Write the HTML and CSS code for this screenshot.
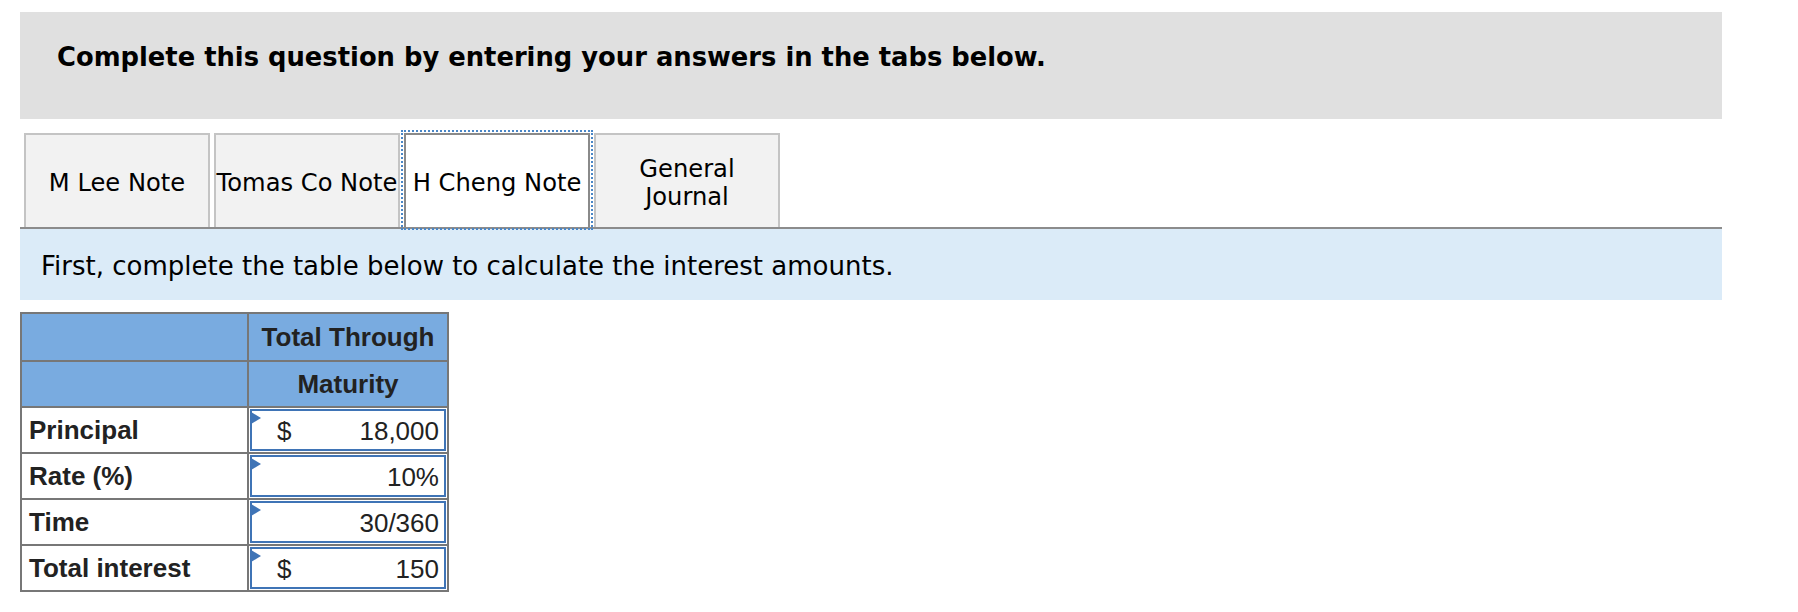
FILE: index.html
```html
<!DOCTYPE html>
<html lang="en">
<head>
<meta charset="utf-8">
<title>Notes</title>
<link rel="stylesheet" href="styles.css">
</head>
<body>
<div class="page">
  <div class="instructions">Complete this question by entering your answers in the tabs below.</div>

  <div class="tabs">
    <div class="tab">M Lee Note</div>
    <div class="tab">Tomas Co Note</div>
    <div class="tab tab-active">H Cheng Note</div>
    <div class="tab">General<br>Journal</div>
  </div>

  <div class="band">First, complete the table below to calculate the interest amounts.</div>

  <table class="calc">
    <tr class="head head-first">
      <th class="label-col"></th>
      <th class="value-col">Total Through</th>
    </tr>
    <tr class="head">
      <th class="label-col"></th>
      <th class="value-col">Maturity</th>
    </tr>
    <tr>
      <td class="label">Principal</td>
      <td class="cell"><div class="input"><span class="cur">$</span><span class="num">18,000</span></div></td>
    </tr>
    <tr>
      <td class="label">Rate (%)</td>
      <td class="cell"><div class="input"><span class="cur"></span><span class="num">10%</span></div></td>
    </tr>
    <tr>
      <td class="label">Time</td>
      <td class="cell"><div class="input"><span class="cur"></span><span class="num">30/360</span></div></td>
    </tr>
    <tr>
      <td class="label">Total interest</td>
      <td class="cell"><div class="input"><span class="cur">$</span><span class="num">150</span></div></td>
    </tr>
  </table>
</div>
</body>
</html>
```

FILE: styles.css
```css
html, body {
  margin: 0;
  padding: 0;
  background: #ffffff;
}

.page {
  width: 1702px;
  padding: 12px 0 0 20px;
}

.instructions {
  background: #e0e0e0;
  height: 107px;
  box-sizing: border-box;
  padding: 30px 0 0 37px;
  font-family: "DejaVu Sans", Verdana, sans-serif;
  font-weight: bold;
  font-size: 25.8px;
  line-height: 30px;
  color: #000;
}

.tabs {
  display: flex;
  gap: 4px;
  margin-top: 14px;
  padding-left: 4px;
}

.tab {
  width: 186px;
  height: 94px;
  box-sizing: border-box;
  border: 2px solid #c4c4c4;
  border-bottom: none;
  background: #f2f2f2;
  display: flex;
  align-items: center;
  justify-content: center;
  text-align: center;
  font-family: "DejaVu Sans", Verdana, sans-serif;
  font-size: 24.2px;
  line-height: 28px;
  color: #000;
  white-space: nowrap;
  padding-top: 4px;
}

.tab-active {
  background: #ffffff;
  border-color: #8a8a8a;
  outline: 2px dotted #4a86c6;
  outline-offset: 1px;
}

.band {
  border-top: 2px solid #8c8c8c;
  background: #dbebf8;
  height: 73px;
  box-sizing: border-box;
  padding: 22px 0 0 21px;
  font-family: "DejaVu Sans", Verdana, sans-serif;
  font-size: 26px;
  line-height: 30px;
  color: #000;
}

.calc {
  margin-top: 12px;
  border-collapse: collapse;
  font-family: "Liberation Sans", Arial, sans-serif;
  font-size: 26px;
  color: #222;
}

.calc th,
.calc td {
  border: 2px solid #777777;
  padding: 0;
}

.head th {
  background: #79abe0;
  height: 44px;
  font-weight: bold;
  text-align: center;
}

.head-first th {
  height: 46px;
}

.label-col {
  width: 225px;
}

.value-col {
  width: 198px;
}

.label {
  height: 44px;
  font-weight: bold;
  padding-left: 7px !important;
  text-align: left;
}

.cell {
  padding: 1px !important;
}

.input {
  position: relative;
  height: 42px;
  box-sizing: border-box;
  border: 2px solid #3f74b6;
  display: flex;
  align-items: center;
  justify-content: space-between;
  padding: 2px 5px 0 25px;
  font-weight: normal;
}

.input::before {
  content: "";
  position: absolute;
  left: -1px;
  top: 1px;
  border-left: 10px solid #3f74b6;
  border-top: 6px solid transparent;
  border-bottom: 6px solid transparent;
}
```
